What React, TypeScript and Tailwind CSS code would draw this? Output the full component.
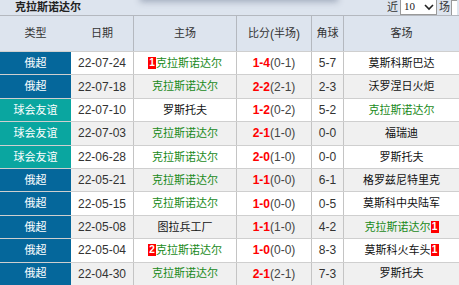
import React from "react";

type Row = {
  type: string;
  date: string;
  home: string;
  homeGreen: boolean;
  homeBadge?: string;
  score: string;
  half: string;
  corner: string;
  away: string;
  awayGreen: boolean;
  awayBadge?: string;
};

const rows: Row[] = [
  { type: "俄超", date: "22-07-24", home: "克拉斯诺达尔", homeGreen: true, homeBadge: "1", score: "1-4", half: "(0-1)", corner: "5-7", away: "莫斯科斯巴达", awayGreen: false },
  { type: "俄超", date: "22-07-18", home: "克拉斯诺达尔", homeGreen: true, score: "2-2", half: "(2-1)", corner: "2-3", away: "沃罗涅日火炬", awayGreen: false },
  { type: "球会友谊", date: "22-07-10", home: "罗斯托夫", homeGreen: false, score: "1-2", half: "(0-2)", corner: "5-2", away: "克拉斯诺达尔", awayGreen: true },
  { type: "球会友谊", date: "22-07-03", home: "克拉斯诺达尔", homeGreen: true, score: "2-1", half: "(1-0)", corner: "0-0", away: "福瑞迪", awayGreen: false },
  { type: "球会友谊", date: "22-06-28", home: "克拉斯诺达尔", homeGreen: true, score: "2-0", half: "(1-0)", corner: "0-0", away: "罗斯托夫", awayGreen: false },
  { type: "俄超", date: "22-05-21", home: "克拉斯诺达尔", homeGreen: true, score: "1-1", half: "(0-0)", corner: "6-1", away: "格罗兹尼特里克", awayGreen: false },
  { type: "俄超", date: "22-05-15", home: "克拉斯诺达尔", homeGreen: true, score: "1-0", half: "(0-0)", corner: "0-5", away: "莫斯科中央陆军", awayGreen: false },
  { type: "俄超", date: "22-05-08", home: "图拉兵工厂", homeGreen: false, score: "1-1", half: "(1-0)", corner: "4-2", away: "克拉斯诺达尔", awayGreen: true, awayBadge: "1" },
  { type: "俄超", date: "22-05-04", home: "克拉斯诺达尔", homeGreen: true, homeBadge: "2", score: "1-0", half: "(0-0)", corner: "8-3", away: "莫斯科火车头", awayGreen: false, awayBadge: "1" },
  { type: "俄超", date: "22-04-30", home: "克拉斯诺达尔", homeGreen: true, score: "2-1", half: "(2-1)", corner: "7-3", away: "罗斯托夫", awayGreen: false },
];

const font = { fontFamily: '"Liberation Sans", "Noto Sans CJK SC", sans-serif' };

function Badge({ n }: { n: string }) {
  return (
    <span className="inline-flex items-center justify-center bg-[#ff0000] text-white font-bold text-[10px] leading-none w-[8px] h-[12px]">
      {n}
    </span>
  );
}

export default function App() {
  return (
    <div className="w-[459px] h-[285px] overflow-hidden bg-[#dde4ee] text-[11px] text-[#333] relative" style={font}>
      <div className="absolute left-[140px] top-[-20px] w-[198px] h-[20px] shadow-[0_2px_6px_rgba(90,105,130,0.45)] bg-[#dde4ee]" />
      <div className="h-[16px] flex items-end justify-between pl-[15px] pr-[2px] border-b border-[#b4b8bf]">
        <span className="font-bold text-[#222] text-[11px] leading-none pb-[2px]">克拉斯诺达尔</span>
        <div className="flex items-end h-full">
          <span className="pb-[2px] leading-none text-[11px]">近</span>
          <div className="ml-[2px] w-[37px] h-[16px] mt-[-1px] bg-white border border-[#9a9a9a] border-t-0 flex items-center justify-between pl-[3px] pr-[2px] text-[11px]">
            <span className="text-[#222]" style={{ fontFamily: '"Liberation Serif", serif' }}>10</span>
            <svg width="10" height="8" viewBox="0 0 10 8"><path d="M1 2 L5 6 L9 2" fill="none" stroke="#222" strokeWidth="1.6" /></svg>
          </div>
          <span className="ml-[2px] pb-[2px] leading-none text-[11px]">场</span>
          <div className="ml-[1px] w-[6px] h-full border-l border-t border-[#9a9a9a] bg-white" />
        </div>
      </div>
      <div className="grid grid-cols-[71px_63px_103px_75px_32px_1fr] h-[35px] items-stretch text-[11px] text-[#333]">
        <div className="flex items-center justify-center">类型</div>
        <div className="flex items-center justify-center border-r border-[#b4b8bf]">日期</div>
        <div className="flex items-center justify-center border-r border-[#b4b8bf]">主场</div>
        <div className="flex items-center justify-center border-r border-[#b4b8bf]">比分<span className="text-[12px]">(</span>半场<span className="text-[12px]">)</span></div>
        <div className="flex items-center justify-center border-r border-[#b4b8bf]">角球</div>
        <div className="flex items-center justify-center">客场</div>
      </div>
      {rows.map((r, i) => {
        const bg = i % 2 === 0 ? "bg-white" : "bg-[#f0f0f0]";
        const typeBg = r.type === "俄超" ? "bg-[#05679b]" : "bg-[#0aa6a0]";
        return (
          <div key={i} className={`grid grid-cols-[71px_63px_103px_75px_32px_1fr] h-[23.4px] border-t border-[#cfcfcf] text-[11px] ${bg}`}>
            <div className={`${typeBg} text-white flex items-center justify-center`}>{r.type}</div>
            <div className="flex items-center justify-center border-r border-[#c4c4c4] text-[#333] text-[12px]">{r.date}</div>
            <div className={`flex items-center justify-center border-r border-[#c4c4c4] ${r.homeGreen ? "text-[#1a8a1a]" : "text-[#111]"}`}>
              {r.homeBadge && <Badge n={r.homeBadge} />}
              <span>{r.home}</span>
            </div>
            <div className="flex items-center justify-center border-r border-[#c4c4c4] text-[12px]">
              <span className="text-[#ff0000] font-bold">{r.score}</span>
              <span className="text-[#444]">{r.half}</span>
            </div>
            <div className="flex items-center justify-center border-r border-[#c4c4c4] text-[#333] text-[12px]">{r.corner}</div>
            <div className={`flex items-center justify-center ${r.awayGreen ? "text-[#1a8a1a]" : "text-[#111]"}`}>
              <span>{r.away}</span>
              {r.awayBadge && <Badge n={r.awayBadge} />}
            </div>
          </div>
        );
      })}
    </div>
  );
}
